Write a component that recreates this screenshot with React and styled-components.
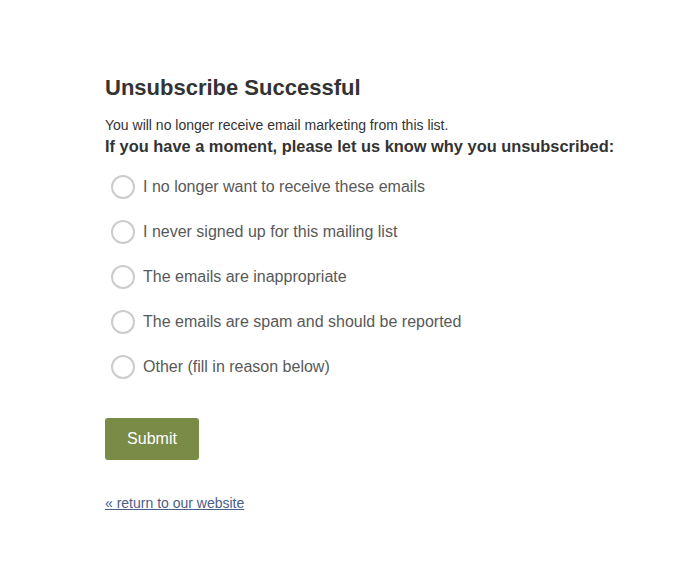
import React, { useState } from 'react';
import styled, { createGlobalStyle } from 'styled-components';

const GlobalStyle = createGlobalStyle`
  body {
    margin: 0;
    background: #fff;
    font-family: "Liberation Sans", Arial, sans-serif;
  }
`;

const reasons = [
  'I no longer want to receive these emails',
  'I never signed up for this mailing list',
  'The emails are inappropriate',
  'The emails are spam and should be reported',
  'Other (fill in reason below)',
];

const Page = styled.div`
  padding: 75px 0 40px 105px;
  color: #333;
`;

const Title = styled.h1`
  margin: 0 0 16px;
  font-size: 22px;
  line-height: 26px;
  font-weight: 700;
  color: #333;
`;

const Note = styled.p`
  margin: 0;
  font-size: 14px;
  line-height: 16px;
  color: #333;
`;

const Question = styled.p`
  margin: 3px 0 16px;
  font-size: 16.4px;
  line-height: 20px;
  font-weight: 700;
  color: #333;
`;

const Options = styled.div`
  display: flex;
  flex-direction: column;
  gap: 15px;
`;

const Option = styled.label`
  display: flex;
  align-items: center;
  height: 30px;
  cursor: pointer;
  font-size: 16px;
  color: #595959;
`;

const Circle = styled.span`
  box-sizing: border-box;
  width: 24px;
  height: 24px;
  margin: 0 8px 0 6px;
  border-radius: 50%;
  border: 2px solid ${({ checked }) => (checked ? '#7a8a47' : '#ccc')};
  background: ${({ checked }) => (checked ? 'radial-gradient(circle, #7a8a47 0 5px, #fff 6px)' : '#fff')};
`;

const Submit = styled.button`
  margin-top: 36px;
  width: 94px;
  height: 42px;
  border: none;
  border-radius: 3px;
  background: #7a8a47;
  color: #fff;
  font-family: inherit;
  font-size: 16px;
  cursor: pointer;
`;

const BackLink = styled.a`
  display: inline-block;
  margin-top: 35px;
  font-size: 14px;
  color: #4a6087;
  text-decoration: underline;
`;

const App = () => {
  const [picked, setPicked] = useState(null);
  return (
    <>
      <GlobalStyle />
      <Page>
        <Title>Unsubscribe Successful</Title>
        <Note>You will no longer receive email marketing from this list.</Note>
        <Question>If you have a moment, please let us know why you unsubscribed:</Question>
        <Options>
          {reasons.map((reason, i) => (
            <Option key={reason} onClick={() => setPicked(i)}>
              <Circle checked={picked === i} />
              {reason}
            </Option>
          ))}
        </Options>
        <Submit type="button">Submit</Submit>
        <div>
          <BackLink href="#">« return to our website</BackLink>
        </div>
      </Page>
    </>
  );
};

export default App;
